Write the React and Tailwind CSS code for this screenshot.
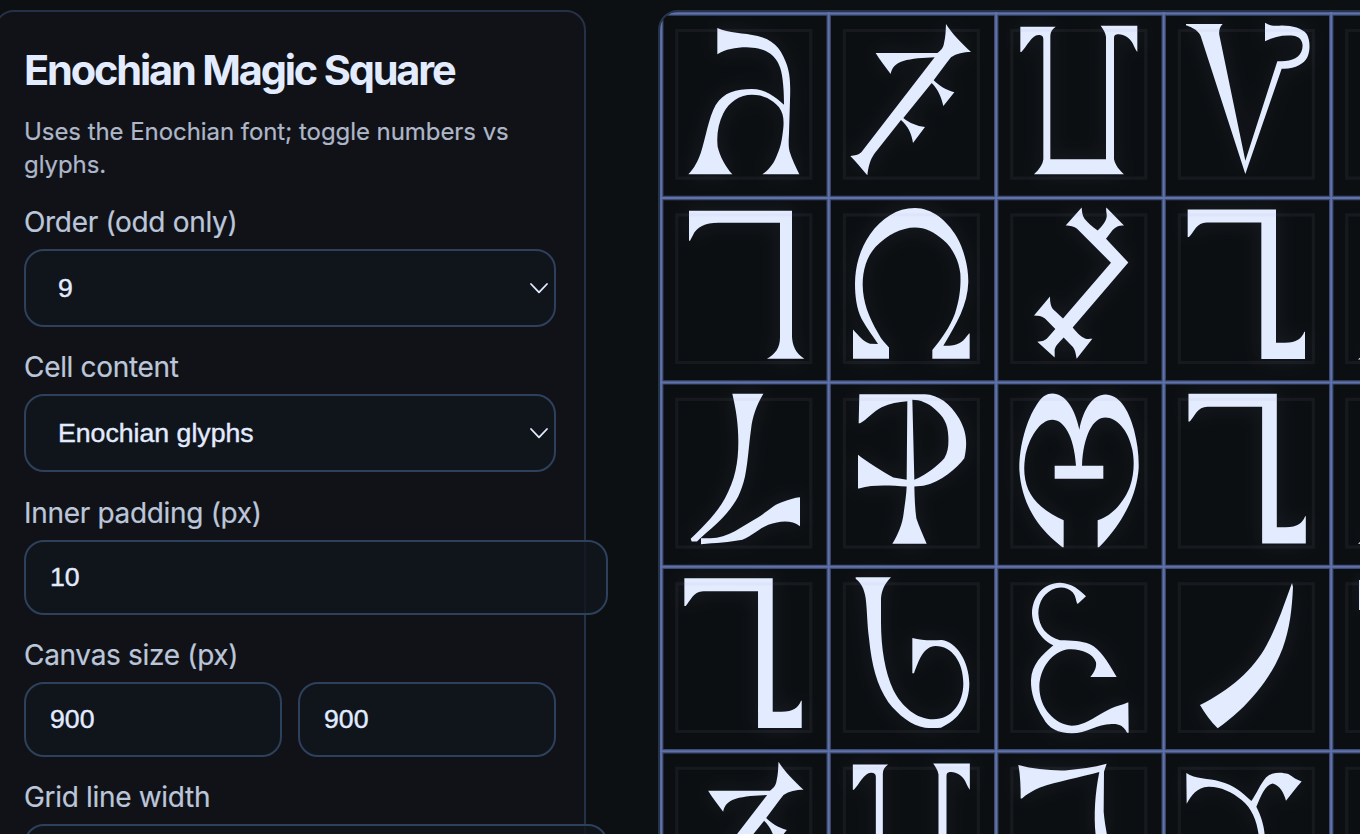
import React from "react";

// Sigil outlines are drawn at three units per pixel; x and y give the cell origin.
const SIGILS = {
  un: { x: 18, y: 40, d: "M187 84C222 100 265 98 308 108C350 118 375 140 392 185C405 215 407 250 405 300L402 400C401 425 400 440 404 455C410 475 422 500 433 523L322 523C340 510 355 493 364 470C376 445 380 425 383 400C388 365 387 342 372 322C352 298 325 284 291 284C255 284 222 305 205 340C190 370 184 405 188 440C195 470 212 500 232 523L100 523C118 505 128 485 137 460C152 415 160 355 182 315C205 277 245 267 290 267C330 267 360 290 387 314C387 275 384 230 376 205C362 160 325 143 275 142C240 142 212 148 187 163Z" },
  graph: { x: 520.5, y: 40, d: "M873 72C890 100 920 130 948 156C925 156 905 160 888 172C870 195 852 220 836 241C850 255 872 270 898 277L865 318C860 295 850 268 830 249L745 354C765 370 785 378 810 381L774 429C770 400 758 378 738 360L658 461C645 480 640 500 637 526C622 508 604 487 586 468C600 467 610 465 619 457L839 172C805 173 770 176 745 183C720 190 710 205 707 222C690 200 675 180 662 159L847 159C856 153 865 145 867 130C872 110 872 90 873 72Z" },
  drux: { x: 18, y: 40, d: "M91 80L197 80C188 86 181 95 181 108L181 478L348 478L348 110C346 98 340 88 332 77L442 77L442 156C436 150 432 138 428 130C418 112 400 101 382 103C374 104 372 108 372 116L372 478C377 498 388 510 402 523L132 523C146 510 158 495 160 478L160 118C160 108 155 105 145 105C125 106 110 140 94 156L91 156Z" },
  van: { x: 520.5, y: 40, d: "M588 72L698 72C690 80 686 90 688 105L766 482L862 184C895 184 925 178 934 155C942 135 938 115 915 108C885 104 855 108 825 124L825 68C840 76 850 79 870 77C905 76 935 84 950 102C960 118 962 150 952 172C942 192 915 208 875 206L766 522L632 108C625 92 610 84 588 76Z" },
  ged: { x: 18, y: 8, d: "M102 47L411 47L411 425C412 450 422 475 448 491L336 491C360 478 375 458 375 428L375 83L190 83C150 83 125 95 113 122L105 137L102 137Z" },
  mals: { x: 520.5, y: 8, d: "M780 39C830 39 875 75 905 125C925 160 940 210 940 260C938 330 905 385 865 452C895 453 915 448 930 430L942 415L944 415L944 491L832 491L832 465C860 430 885 395 900 355C915 310 918 270 916 235C912 200 895 160 865 135C838 110 810 97 780 97C740 97 695 120 662 155C635 185 623 225 623 270C624 320 640 365 670 415C680 435 692 445 702 457L702 491L594 491L594 403C610 420 625 440 645 446L669 447C655 425 635 400 620 372C605 340 600 305 600 265C600 215 615 160 645 118C680 70 725 39 780 39Z" },
  ceph: { x: 18, y: 8, d: "M275 37C276 50 277 60 283 70C292 82 308 96 323 106C335 95 348 80 350 65C351 55 347 45 349 37L402 91C385 91 378 95 368 105L348 131L415 202L248 397C260 412 272 425 285 430C293 433 300 431 307 431L260 491C257 475 256 462 245 452L221 427C205 445 192 455 194 470L194 487L142 440C158 439 165 436 173 428L196 402L165 370C155 362 145 362 132 361L180 304C180 325 183 338 195 348L219 370L363 203L262 102C252 92 240 92 227 91Z" },
  gal: { x: 520.5, y: 8, d: "M593 43L858 43L858 443L885 443C920 443 935 430 943 410L945 410L945 492L814 492L814 82L650 82C620 82 612 110 597 126L593 126Z" },
  ur: { x: 18, y: 7, d: "M232 42L325 42C305 75 292 110 288 150C282 190 280 240 270 290C258 340 245 365 215 400C185 435 150 460 126 485L110 485L107 477C150 435 185 400 210 355C240 300 250 250 250 185C250 130 242 85 232 42ZM138 475L160 475C215 478 260 440 310 412C340 393 355 375 380 367C400 360 420 353 435 352L435 439C410 420 375 422 340 435C310 447 290 470 262 480C225 487 180 490 138 493Z" },
  fam: { x: 520.5, y: 7, d: "M613 43L810 43C850 45 885 70 912 115C935 155 938 190 928 235C905 265 860 305 805 318L778 320C779 355 780 385 784 415C792 440 804 465 815 492L712 492C728 465 742 435 746 400C750 370 754 345 755 320C710 318 660 312 612 326L609 326L609 225C635 245 680 275 715 293L755 300L757 64C730 66 705 70 680 82C655 95 635 120 615 130L611 130ZM772 60L778 300C815 285 850 255 868 235C880 215 881 195 880 170C879 130 865 110 840 88C820 70 795 60 772 60Z" },
  tal: { x: 18, y: 7, d: "M187 41C225 41 255 85 268 150C280 85 310 44 346 44C385 44 415 85 432 150C442 190 447 225 446 265C440 355 390 440 327 502L323 502L323 421C370 408 405 360 420 320C432 285 434 245 427 210C415 150 380 113 346 113C310 113 280 165 276 258L340 258L340 297L194 297L194 258L258 258C252 165 220 120 187 120C150 120 115 175 105 235C100 270 103 300 115 330C130 365 170 400 221 421L221 502L217 502C150 450 95 380 88 270C87 200 110 120 140 75C155 50 170 41 187 41Z" },
  med: { x: 520.5, y: 5, d: "M602 37L708 37C690 55 680 75 678 100L678 170C678 250 690 320 715 375C740 425 785 463 835 463C890 463 925 415 925 355C925 290 890 243 842 243C805 243 790 290 777 325L772 325L772 219C800 227 830 227 860 225C905 230 942 290 943 355C943 420 910 465 858 488C842 489 825 489 810 488C770 483 730 450 700 412C665 360 650 300 642 220C636 175 637 140 632 100C628 70 617 52 602 41Z" },
  pal: { x: 18, y: 5, d: "M288 94L263 117C257 110 259 95 248 82C235 68 215 65 197 70C165 80 145 110 145 145C146 185 170 215 210 226C245 226 275 228 300 238C330 252 350 285 380 336L301 336C315 320 320 305 318 292C310 265 270 250 235 253C185 260 150 310 148 365C148 430 195 478 245 482C300 482 330 435 400 418L415 412L416 503L411 503C400 480 385 476 365 477C320 478 290 505 245 505C205 505 175 490 160 460C135 420 122 385 123 345C125 300 155 270 190 241C155 225 127 185 126 145C127 95 160 53 210 53C245 54 270 75 288 94Z" },
  blade: { x: 520.5, y: 5, d: "M906 54L909 66C906 130 900 190 878 250C845 340 770 430 683 490C662 470 645 445 630 420C720 375 790 315 830 240C865 175 885 110 906 54Z" },
  don: { x: 18, y: 33, d: "M85 75C130 87 180 92 225 91C270 87 310 82 350 71L342 95L341 215C343 240 347 262 351 285L317 285C311 225 315 160 328 96C270 112 200 125 150 142C130 150 110 162 96 175L92 175C92 140 91 105 85 75Z" },
  gon: { x: 520.5, y: 33, d: "M589 99C615 117 655 115 690 124C730 133 760 160 784 183C800 160 812 130 828 112C845 95 875 95 895 102C910 112 920 120 935 124C920 140 905 160 888 182C882 160 870 135 848 130C825 133 812 170 799 200C812 225 822 255 824 285L806 285C800 240 785 205 755 180C725 155 690 139 655 140C620 142 605 165 590 191Z" },
  foot: { x: 0, y: 0, d: "M81 485L120 450L120 485Z" },
  serif: { x: 0, y: 0, d: "M84 40L180 40L180 78L140 78L89 130L84 130Z" },
};

// Each entry is a sigil name and an optional horizontal nudge in pixels.
const ROWS = [
  [["un"], ["graph"], ["drux"], ["van"], null],
  [["ged"], ["mals"], ["ceph"], ["gal"], ["foot"]],
  [["ur"], ["fam"], ["tal"], ["gal", 0.8], ["foot"]],
  [["gal", -0.8], ["med"], ["pal"], ["blade"], ["serif"]],
  [["graph"], ["drux"], ["don"], ["gon"], null],
];

const CELL_W = 167.5;
const CELL_H = 184.45;

function GridLines({ width, color }) {
  return (
    <g stroke={color} strokeWidth={width}>
      {[0, 1, 2, 3, 4].map((i) => (
        <line key={`v${i}`} x1={1.2 + i * CELL_W} x2={1.2 + i * CELL_W} y1="0" y2="830" />
      ))}
      {[0, 1, 2, 3, 4].map((i) => (
        <line key={`h${i}`} y1={1.5 + i * CELL_H} y2={1.5 + i * CELL_H} x1="0" x2="760" />
      ))}
    </g>
  );
}

function MagicSquare() {
  return (
    <svg width="760" height="830" viewBox="0 0 760 830" className="block shrink-0">
      <defs>
        <filter id="glow" x="-20%" y="-20%" width="140%" height="140%">
          <feDropShadow dx="0" dy="0" stdDeviation="30" floodColor="#a0a8c8" floodOpacity="0.09" />
        </filter>
      </defs>
      {ROWS.map((row, r) =>
        row.map((entry, c) => {
          const s = entry && SIGILS[entry[0]];
          const nudge = (entry && entry[1]) || 0;
          return (
            <g key={`${r}-${c}`} transform={`translate(${1 + c * CELL_W} ${1.3 + r * CELL_H}) scale(0.33333)`}>
              {s && (
                <path
                  d={s.d}
                  transform={`translate(${nudge * 3 - s.x} ${-s.y})`}
                  fill="#e3ebff"
                  fillRule="evenodd"
                  filter="url(#glow)"
                />
              )}
              <rect x="47.5" y="51.5" width="402" height="443" fill="none" stroke="#a0a4bc" strokeOpacity="0.075" strokeWidth="9.5" />
            </g>
          );
        })
      )}
      <GridLines width="4.4" color="#3d4a72" />
      <GridLines width="2" color="#6072aa" />
    </svg>
  );
}

const FIELD =
  "block rounded-[20px] border-2 border-[#2d405c] bg-[#10161e]/80 font-['Liberation_Sans',Arial,sans-serif] text-[26.67px] text-[#e3ebff] outline-none [-webkit-text-stroke:0.4px_#e3ebff]";

function Label({ children }) {
  return (
    <div className="h-[44px] whitespace-nowrap text-[28px] leading-[34px] tracking-[-0.32px] text-[#bcc6da] [-webkit-text-stroke:0.2px_#bcc6da]">
      {children}
    </div>
  );
}

function Select({ value }) {
  return (
    <div className="relative">
      <select defaultValue={value} className={`${FIELD} h-[78px] w-full appearance-none pl-8`}>
        <option>{value}</option>
      </select>
      <svg className="pointer-events-none absolute right-[7px] top-[32px]" width="20" height="14" viewBox="0 0 20 14" fill="none" stroke="#e3ebff" strokeWidth="1.8" strokeLinecap="round" strokeLinejoin="round">
        <path d="M2 3L10 11.3L18 3" />
      </svg>
    </div>
  );
}

export default function App() {
  return (
    <div className="flex h-[834px] w-[1360px] items-start overflow-hidden bg-[#0c1013] pt-[10px] font-[Inter,sans-serif]">
      <aside className="-ml-[6px] h-[1000px] w-[592px] shrink-0 rounded-[20px] border-2 border-[#253145] bg-[#101217] px-7 pt-[32px]">
        <h1 className="h-[70px] whitespace-nowrap text-[41.5px] font-bold leading-[52px] tracking-[-2.17px] text-[#e3ebff]">Enochian Magic Square</h1>
        <p className="h-[81px] pt-[1px] text-[24px] leading-[33px] tracking-[-0.06px] text-[#aeb7c9] [-webkit-text-stroke:0.2px_#aeb7c9]">
          Uses the Enochian font; toggle numbers vs<br />glyphs.
        </p>
        <div className="pt-[10px]">
          <Label>Order (odd only)</Label>
          <Select value="9" />
        </div>
        <div className="pt-[23px]">
          <Label>Cell content</Label>
          <Select value="Enochian glyphs" />
        </div>
        <div className="pt-[24px]">
          <Label>Inner padding (px)</Label>
          <input defaultValue="10" className={`${FIELD} h-[75px] w-[584px] pl-6`} />
        </div>
        <div className="pt-[23px]">
          <Label>Canvas size (px)</Label>
          <div className="flex gap-4">
            <input defaultValue="900" className={`${FIELD} h-[75px] w-[258px] pl-6`} />
            <input defaultValue="900" className={`${FIELD} h-[75px] w-[258px] pl-6`} />
          </div>
        </div>
        <div className="pt-[23px]">
          <Label>Grid line width</Label>
          <input defaultValue="2" className={`${FIELD} h-[75px] w-[584px] pl-6`} />
        </div>
      </aside>
      <main className="ml-[72px] h-[1000px] w-[1000px] shrink-0 overflow-hidden rounded-[20px] border-2 border-[#26344a] bg-[#0c0f12]">
        <MagicSquare />
      </main>
    </div>
  );
}
